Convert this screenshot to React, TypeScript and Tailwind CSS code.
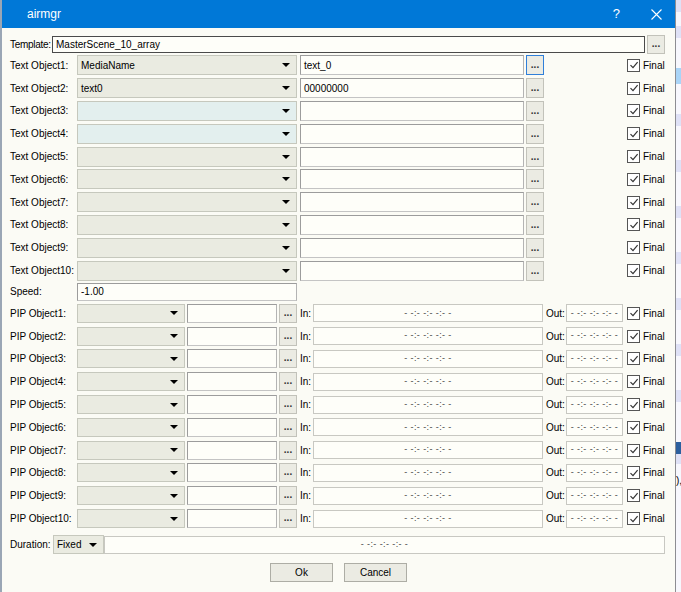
import React from 'react';

const DASH = '- -:- -:- -:- -';

function Arrow() {
  return <span className="h-0 w-0 border-x-[4px] border-t-[4px] border-x-transparent border-t-black" />;
}

function Combo({ value = '', className = '', tint = false }: { value?: string; className?: string; tint?: boolean }) {
  return (
    <div
      className={`flex items-center justify-between border border-[#c6c8bd] pl-[3px] pr-[6px] ${
        tint ? 'bg-[#e3efee]' : 'bg-[#eaebe1]'
      } ${className}`}
    >
      <span>{value}</span>
      <Arrow />
    </div>
  );
}

function Field({ value = '', className = '' }: { value?: string; className?: string }) {
  return (
    <div
      className={`flex items-center border border-[#9c9c9c] border-b-[#c4c4c4] border-r-[#b4b4b4] bg-[#fefef9] pl-[3px] ${className}`}
    >
      {value}
    </div>
  );
}

function Dots({ focus = false, className = 'h-[20px]' }: { focus?: boolean; className?: string }) {
  return (
    <div
      className={`flex w-[18px] shrink-0 items-end justify-center border bg-[#ebebe3] pb-[4px] text-[10px] font-bold leading-none text-[#333] ${
        focus ? 'border-[#2f7fd9]' : 'border-[#c2c2ba]'
      } ${className}`}
    >
      ...
    </div>
  );
}

function Check() {
  return (
    <div className="flex items-center gap-[3px]">
      <div className="flex h-[13px] w-[13px] items-center justify-center border border-[#555] bg-white">
        <svg width="10" height="10" viewBox="0 0 10 10">
          <path d="M1.5 5.2 L4 7.7 L8.6 2.2" fill="none" stroke="#333" strokeWidth="1.2" />
        </svg>
      </div>
      <span>Final</span>
    </div>
  );
}

function TextRow({ n, combo, text, tint, focus }: { n: number; combo?: string; text?: string; tint?: boolean; focus?: boolean }) {
  return (
    <div className="flex h-[22.8px] items-center">
      <span className="w-[67px] shrink-0">Text Object{n}:</span>
      <Combo value={combo} tint={tint} className="h-[20px] w-[220px] shrink-0" />
      <Field value={text} className="ml-[3px] h-[20px] w-[224px] shrink-0" />
      <Dots focus={focus} className="ml-[2px] h-[20px]" />
      <div className="ml-[83px]">
        <Check />
      </div>
    </div>
  );
}

function PipRow({ n }: { n: number }) {
  return (
    <div className="flex h-[22.8px] items-center">
      <span className="w-[67px] shrink-0">PIP Object{n}:</span>
      <Combo className="h-[19px] w-[108px] shrink-0" />
      <Field className="ml-[2px] h-[19px] w-[90px] shrink-0" />
      <Dots className="ml-[2px] h-[19px]" />
      <span className="ml-[3px] w-[13px] shrink-0">In:</span>
      <div className="flex h-[18px] w-[230px] shrink-0 items-center justify-center border border-[#c8c8c2] bg-[#fefef9] text-[9px] tracking-[0.4px] text-[#444]">
        {DASH}
      </div>
      <span className="ml-[3px] w-[20px] shrink-0">Out:</span>
      <div className="flex h-[18px] w-[57px] shrink-0 items-center justify-center overflow-hidden whitespace-nowrap border border-[#c8c8c2] bg-[#fefef9] text-[9px] tracking-[0.4px] text-[#444]">
        {DASH}
      </div>
      <div className="ml-[4px]">
        <Check />
      </div>
    </div>
  );
}

export default function App() {
  const textRows = [
    { combo: 'MediaName', text: 'text_0', focus: true },
    { combo: 'text0', text: '00000000' },
    { tint: true },
    { tint: true },
    {},
    {},
    {},
    {},
    {},
    {},
  ];
  return (
    <div className="flex h-[592px] w-[681px] overflow-hidden bg-[#f3f3fb] font-['Liberation_Sans',Arial,sans-serif] text-[10px] text-black">
      <div className="flex w-[676px] shrink-0 flex-col border-r border-l-2 border-r-[#8d8d92] border-l-[#9aa6b5] bg-[#fbfbf5]">
        {/* title bar */}
        <div className="flex h-[28px] shrink-0 items-center bg-[#0078d7] text-white">
          <span className="ml-[25px] text-[12px]">airmgr</span>
          <span className="ml-auto text-[13px]">?</span>
          <svg className="ml-[31px] mr-[13px]" width="11" height="11" viewBox="0 0 11 11">
            <path d="M0.5 0.5 L10.5 10.5 M10.5 0.5 L0.5 10.5" stroke="white" strokeWidth="1.1" />
          </svg>
        </div>

        <div className="flex flex-col pl-[8px]">
          {/* template */}
          <div className="mt-[6px] flex h-[20px] items-center">
            <span className="w-[42px] shrink-0 tracking-[-0.3px]">Template:</span>
            <div className="flex h-[17px] w-[593px] items-center border border-[#4a4a4a] bg-[#fefef9] pl-[3px]">
              MasterScene_10_array
            </div>
            <Dots className="ml-[2px] h-[19px]" />
          </div>

          {textRows.map((r, i) => (
            <TextRow key={i} n={i + 1} combo={r.combo} text={r.text} tint={r.tint} focus={r.focus} />
          ))}

          <div className="flex h-[20px] items-center">
            <span className="w-[67px] shrink-0">Speed:</span>
            <Field value="-1.00" className="h-[18px] w-[220px]" />
          </div>

          {Array.from({ length: 10 }, (_, i) => (
            <PipRow key={i} n={i + 1} />
          ))}

          <div className="mt-[5px] flex h-[20px] items-center">
            <span className="w-[43px] shrink-0">Duration:</span>
            <Combo value="Fixed" className="h-[19px] w-[51px] shrink-0" />
            <div className="flex h-[18px] w-[561px] items-center justify-center border border-[#c8c8c2] bg-[#fefef9] text-[9px] tracking-[0.4px] text-[#444]">
              {DASH}
            </div>
          </div>

          <div className="mt-[8px] flex h-[19px] items-center">
            <div className="ml-[260px] flex h-[19px] w-[63px] items-center justify-center border border-[#adada5] bg-[#ebebe3]">
              Ok
            </div>
            <div className="ml-[11px] flex h-[19px] w-[63px] items-center justify-center border border-[#adada5] bg-[#ebebe3]">
              Cancel
            </div>
          </div>
        </div>
      </div>

      {/* background app peeking out on the right */}
      <div className="flex flex-1 flex-col">
        <div className="h-[12px] bg-[#dfe1f6]" />
        <div className="h-[14px] bg-[#f7f7fd]" />
        <div className="h-[12px] bg-[#dfe1f6]" />
        <div className="h-[30px] bg-[#f7f7fd]" />
        <div className="h-[16px] bg-[#a9d4f7]" />
        <div className="h-[30px] bg-[#f7f7fd]" />
        <div className="h-[12px] bg-[#dfe1f6]" />
        <div className="h-[34px] bg-[#f7f7fd]" />
        <div className="h-[12px] bg-[#dfe1f6]" />
        <div className="h-[34px] bg-[#f7f7fd]" />
        <div className="h-[12px] bg-[#dfe1f6]" />
        <div className="h-[34px] bg-[#f7f7fd]" />
        <div className="h-[12px] bg-[#dfe1f6]" />
        <div className="h-[34px] bg-[#f7f7fd]" />
        <div className="h-[12px] bg-[#dfe1f6]" />
        <div className="h-[34px] bg-[#f7f7fd]" />
        <div className="h-[12px] bg-[#dfe1f6]" />
        <div className="h-[34px] bg-[#f7f7fd]" />
        <div className="h-[12px] bg-[#dfe1f6]" />
        <div className="h-[40px] bg-[#f7f7fd]" />
        <div className="h-[12px] bg-[#2c5f9e]" />
        <div className="h-[10px] bg-[#dfe1f6]" />
        <div className="flex-1 bg-[#f7f7fd] pt-[12px] text-[10px] leading-none">),</div>
      </div>
    </div>
  );
}
